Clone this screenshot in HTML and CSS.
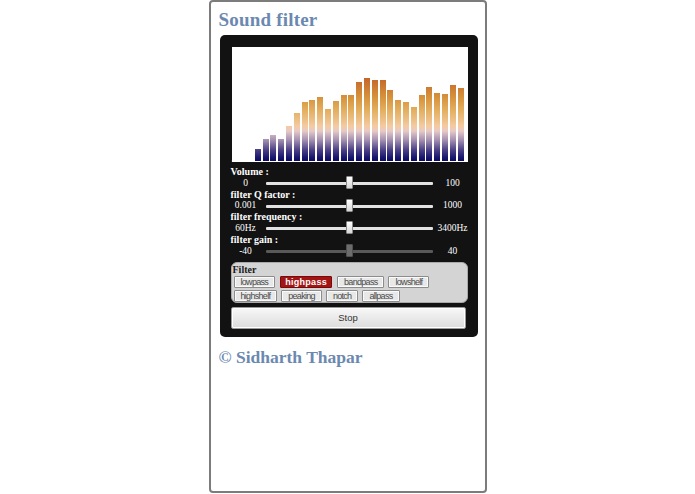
FILE: index.html
```html
<!DOCTYPE html>
<html>
<head>
<meta charset="utf-8">
<title>Sound filter</title>
<link rel="stylesheet" href="styles.css">
</head>
<body>
<div class="page">
  <h1 class="title">Sound filter</h1>
  <div class="player">
    <div class="viz">
      <div class="bar" style="height:0px"></div>
      <div class="bar" style="height:0px"></div>
      <div class="bar" style="height:0px"></div>
      <div class="bar" style="height:12px"></div>
      <div class="bar" style="height:22px"></div>
      <div class="bar" style="height:26px"></div>
      <div class="bar" style="height:22px"></div>
      <div class="bar" style="height:35px"></div>
      <div class="bar" style="height:48px"></div>
      <div class="bar" style="height:59px"></div>
      <div class="bar" style="height:61px"></div>
      <div class="bar" style="height:64px"></div>
      <div class="bar" style="height:52px"></div>
      <div class="bar" style="height:60px"></div>
      <div class="bar" style="height:66px"></div>
      <div class="bar" style="height:66px"></div>
      <div class="bar" style="height:79px"></div>
      <div class="bar" style="height:83px"></div>
      <div class="bar" style="height:81px"></div>
      <div class="bar" style="height:81px"></div>
      <div class="bar" style="height:71px"></div>
      <div class="bar" style="height:61px"></div>
      <div class="bar" style="height:59px"></div>
      <div class="bar" style="height:54px"></div>
      <div class="bar" style="height:66px"></div>
      <div class="bar" style="height:74px"></div>
      <div class="bar" style="height:68px"></div>
      <div class="bar" style="height:67px"></div>
      <div class="bar" style="height:76px"></div>
      <div class="bar" style="height:73px"></div>
    </div>

    <div class="controls">
      <div class="control">
        <div class="control-label">Volume :</div>
        <div class="control-row">
          <span class="min">0</span>
          <div class="track"><span class="thumb"></span></div>
          <span class="max">100</span>
        </div>
      </div>
      <div class="control">
        <div class="control-label">filter Q factor :</div>
        <div class="control-row">
          <span class="min">0.001</span>
          <div class="track"><span class="thumb"></span></div>
          <span class="max">1000</span>
        </div>
      </div>
      <div class="control">
        <div class="control-label">filter frequency :</div>
        <div class="control-row">
          <span class="min">60Hz</span>
          <div class="track"><span class="thumb"></span></div>
          <span class="max">3400Hz</span>
        </div>
      </div>
      <div class="control disabled">
        <div class="control-label">filter gain :</div>
        <div class="control-row">
          <span class="min">-40</span>
          <div class="track"><span class="thumb"></span></div>
          <span class="max">40</span>
        </div>
      </div>
    </div>

    <div class="filter-box">
      <div class="filter-label">Filter</div>
      <div class="filter-buttons">
        <button class="fbtn">lowpass</button>
        <button class="fbtn active">highpass</button>
        <button class="fbtn">bandpass</button>
        <button class="fbtn">lowshelf</button>
        <button class="fbtn">highshelf</button>
        <button class="fbtn">peaking</button>
        <button class="fbtn">notch</button>
        <button class="fbtn">allpass</button>
      </div>
    </div>

    <button class="stop">Stop</button>
  </div>
  <p class="credit">© Sidharth Thapar</p>
</div>
</body>
</html>
```

FILE: styles.css
```css
* { box-sizing: border-box; }

body {
  margin: 0;
  background: #ffffff;
  font-family: "Liberation Serif", serif;
}

.page {
  width: 278px;
  height: 493px;
  margin: 0 auto;
  border: 2px solid #7c7c7c;
  border-radius: 4px;
  padding: 7px 8px 0 9px;
}

.title {
  margin: 0 0 4px -1px;
  font: bold 19px/22px "Liberation Serif", serif;
  letter-spacing: 0.2px;
  color: #6b89b0;
}

.player {
  width: 258px;
  background: #121212;
  border-radius: 5px;
  padding: 12px 10px 8px 11px;
}

.viz {
  margin-left: 1px;
  width: 236px;
  height: 115px;
  background: #ffffff;
  display: flex;
  align-items: flex-end;
  gap: 1.8px;
  padding-bottom: 1px;
}

.bar {
  width: 6px;
  flex: none;
  background: linear-gradient(to bottom,
      #b04c1c 0px,
      #c4662a 31px,
      #d6923a 50px,
      #e4b062 64px,
      #f4caa0 79px,
      #e6cac6 84px,
      #a490b2 93px,
      #4a4086 103px,
      #16146c 111px,
      #0c0c62 114px) bottom / 100% 114px no-repeat;
  box-shadow: 0 0 0 0.5px rgba(255, 255, 255, 0.35);
}

.controls {
  margin-top: 5px;
}

.control {
  height: 22.7px;
}

.control-label {
  font: bold 10px/10px "Liberation Serif", serif;
  color: #ffffff;
}

.control-row {
  display: grid;
  grid-template-columns: 30px 167px 1fr;
  column-gap: 5px;
  align-items: center;
  height: 12.7px;
  font: 9.5px/1 "Liberation Serif", serif;
  color: #ffffff;
}

.min,
.max {
  text-align: center;
  white-space: nowrap;
}

.track {
  position: relative;
  height: 3px;
  background: #e2e2e2;
  border-radius: 1px;
}

.thumb {
  position: absolute;
  left: 50%;
  top: 50%;
  width: 7px;
  height: 13px;
  margin: -7.5px 0 0 -3.5px;
  background: linear-gradient(#ffffff, #d6d6d6);
  border: 1px solid #8a8a8a;
  border-radius: 1px;
}

.disabled .track {
  background: #595959;
}

.disabled .thumb {
  background: #6c6c6c;
  border-color: #505050;
}

.filter-box {
  margin-top: 4px;
  height: 41.5px;
  background: #d4d4d4;
  border: 1px solid #aaaaaa;
  border-radius: 6px;
  padding: 1px 2px 2px 2px;
}

.filter-label {
  font: bold 10px/11px "Liberation Serif", serif;
  color: #1a1a1a;
  margin-left: -1px;
}

.filter-buttons {
  display: flex;
  flex-wrap: wrap;
  gap: 1.5px 4px;
  margin-top: 1.5px;
}

.fbtn {
  height: 12px;
  margin: 0;
  padding: 0 6px;
  font: 9px/10px "Liberation Sans", Arial, sans-serif;
  letter-spacing: -0.7px;
  color: #4a4a4a;
  background: #e8e8e8;
  border: 1px solid #8c8c8c;
  box-shadow: inset 0 0 0 1px #fafafa;
  border-radius: 1px;
}

.fbtn.active {
  background: #a31414;
  color: #ffffff;
  font-weight: bold;
  letter-spacing: 0.3px;
  border-color: #7a0a0a;
  box-shadow: none;
  padding: 0 4px;
  margin: 0 1px;
}

.stop {
  display: block;
  width: 235px;
  height: 22px;
  margin: 3.5px 0 0 0;
  border: 1px solid #9a9a9a;
  border-radius: 2px;
  background: linear-gradient(#f8f8f8, #dcdcdc);
  box-shadow: inset 0 0 0 1px #ffffff;
  font: 9.5px "Liberation Sans", Arial, sans-serif;
  color: #333333;
}

.credit {
  margin: 10.5px 0 0 -1px;
  font: bold 17.5px/20px "Liberation Serif", serif;
  color: #6b89b0;
}
```
